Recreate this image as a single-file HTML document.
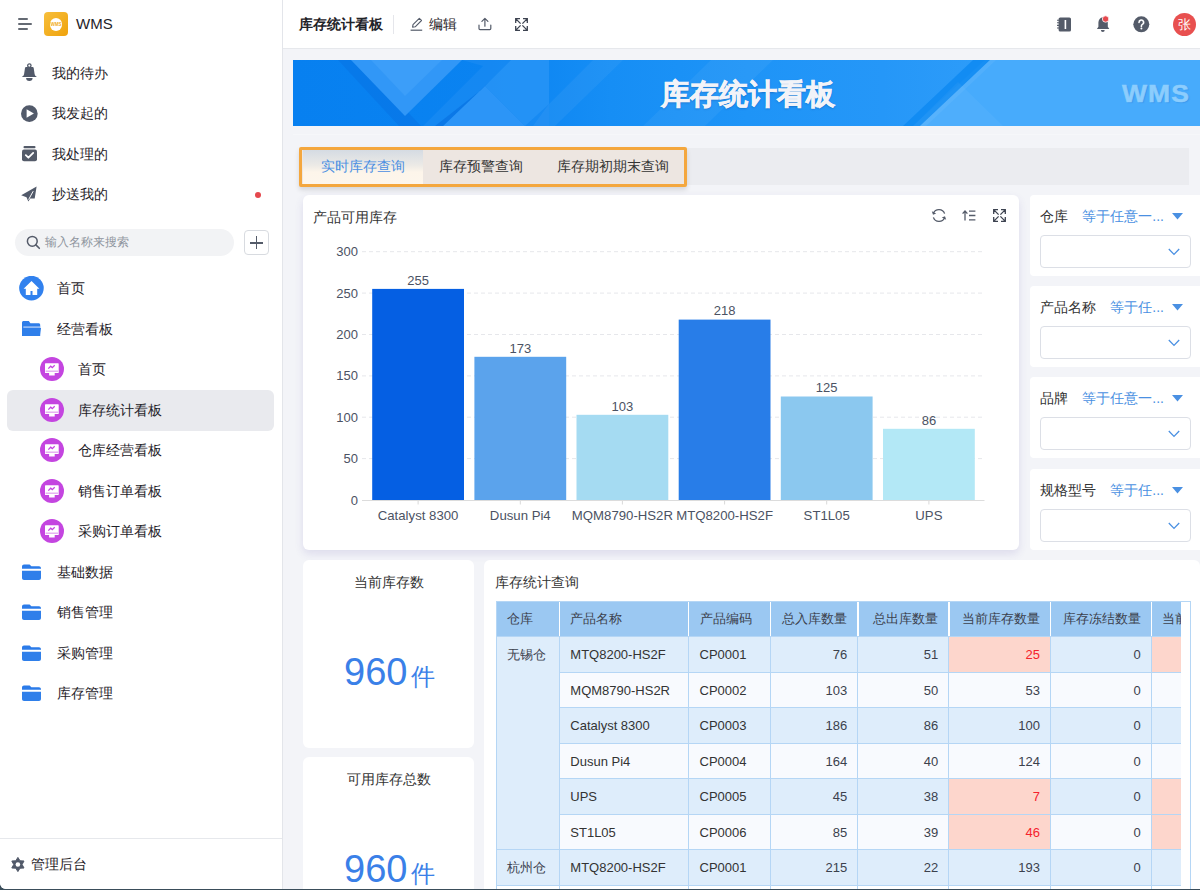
<!DOCTYPE html>
<html><head><meta charset="utf-8">
<style>
*{box-sizing:border-box;margin:0;padding:0}
html,body{width:1200px;height:890px;overflow:hidden;background:#3a4d5a}
body{font-family:"Liberation Sans",sans-serif;color:#1f2329;position:relative}
.a{position:absolute}
#app{position:absolute;left:0;top:0;width:1200px;height:889px;background:#f3f4f8;border-bottom-left-radius:6px;overflow:hidden}
#side{position:absolute;left:0;top:0;width:283px;height:889px;background:#fff;border-right:1px solid #e3e5ea}
.mi{position:absolute;left:52px;font-size:14px;line-height:16px;color:#1f2329;white-space:nowrap}
.ic{position:absolute}
.tr{position:absolute;font-size:14px;line-height:16px;color:#1f2329;white-space:nowrap}
#top{position:absolute;left:283px;top:0;width:917px;height:49px;background:#fff;border-bottom:1px solid #e6e8ec}
.tc{position:absolute;font-size:13px;line-height:15px;color:#3b414d;white-space:nowrap}
.card{position:absolute;background:#fff;border-radius:6px}
</style></head><body>
<div id="app">
<div id="side">
  <!-- hamburger -->
  <div class="a" style="left:18px;top:18px;width:10px;height:2px;background:#646a73;border-radius:1px"></div>
  <div class="a" style="left:18px;top:23px;width:14px;height:2px;background:#646a73;border-radius:1px"></div>
  <div class="a" style="left:18px;top:28px;width:10px;height:2px;background:#646a73;border-radius:1px"></div>
  <!-- logo -->
  <div class="a" style="left:44px;top:12px;width:24px;height:24px;border-radius:4px;background:linear-gradient(135deg,#f7bf3c,#efa20c)"></div>
  <div class="a" style="left:49.8px;top:18.2px;width:12.5px;height:12.5px;border-radius:50%;background:#fff"></div><div class="a" style="left:50px;top:22px;width:12px;text-align:center;font-size:4.5px;line-height:5px;font-weight:bold;color:#f2ad22">WMS</div>
  <div class="a" style="left:76px;top:15px;font-size:15px;line-height:18px;color:#1f2329">WMS</div>

  
  <!-- bell -->
  <svg class="ic" style="left:21px;top:63px" width="17" height="19" viewBox="0 0 17 19"><circle cx="8.35" cy="2.6" r="1.7" fill="none" stroke="#525a6a" stroke-width="1.3"/><path d="M5 4h6.7c.5 0 .9.4 1 .9l.9 6c.2 1.2.9 2.2 2.3 3H0.8c1.4-.8 2.1-1.8 2.3-3l.9-6c.1-.5.5-.9 1-.9z" fill="#525a6a"/><path d="M5.1 15h6.5a3.25 3 0 0 1-6.5 0z" fill="#525a6a"/></svg>
  <div class="mi" style="top:65px">我的待办</div>
  <!-- play -->
  <svg class="ic" style="left:21px;top:104.5px" width="17" height="18" viewBox="0 0 17 18"><circle cx="8.35" cy="8.65" r="8.35" fill="#525a6a"/><path d="M5.6 4.3v8.4l7.3-4.2z" fill="#fff"/></svg>
  <div class="mi" style="top:105px">我发起的</div>
  <!-- check tray -->
  <svg class="ic" style="left:21px;top:145px" width="18" height="18" viewBox="0 0 18 18"><rect x="2.5" y="1" width="12" height="2.2" rx="1" fill="#545b69"/><rect x="1" y="4.6" width="15" height="11.6" rx="2" fill="#545b69"/><path d="M4.8 10.2l2.6 2.5 4.8-4.8" stroke="#fff" stroke-width="1.8" fill="none" stroke-linecap="round" stroke-linejoin="round"/></svg>
  <div class="mi" style="top:146px">我处理的</div>
  <!-- plane -->
  <svg class="ic" style="left:21px;top:186px" width="17" height="17" viewBox="0 0 17 17"><path d="M15.6 0.6L0.2 9.2l5.3 2 1.8 4.3 2-3 4.4.1z" fill="#525a6a"/><path d="M12.2 5.2L7.6 13.6" stroke="#fff" stroke-width="1"/></svg>
  <div class="mi" style="top:186px">抄送我的</div>
  <div class="a" style="left:255px;top:191.5px;width:6px;height:6px;border-radius:50%;background:#e5484d"></div>

  <!-- search -->
  <div class="a" style="left:15px;top:229px;width:219px;height:27px;border-radius:14px;background:#f2f3f5"></div>
  <svg class="ic" style="left:26px;top:235px" width="15" height="15" viewBox="0 0 15 15"><circle cx="6.3" cy="6.3" r="4.9" stroke="#545b69" stroke-width="1.5" fill="none"/><path d="M9.9 9.9l3.4 3.4" stroke="#545b69" stroke-width="1.6" stroke-linecap="round"/></svg>
  <div class="a" style="left:45px;top:235px;font-size:12px;line-height:14px;color:#8f959e">输入名称来搜索</div>
  <div class="a" style="left:244px;top:230px;width:25px;height:25px;border:1px solid #d8dbe0;border-radius:4px;background:#fff"></div>
  <div class="a" style="left:250px;top:242px;width:13px;height:1.5px;background:#545b69"></div>
  <div class="a" style="left:255.75px;top:236px;width:1.5px;height:13px;background:#545b69"></div>

  <!-- tree -->
  <svg class="ic" style="left:19px;top:276px" width="25" height="25" viewBox="0 0 25 25"><circle cx="12.45" cy="12.1" r="12.3" fill="#3181ee"/><path d="M12.5 5L4.6 12.7h2.2V19h4.7v-4h2v4h4.7v-6.3h2.2z" fill="#fff"/></svg>
  <div class="tr" style="left:57px;top:280px">首页</div>
  <svg class="ic" style="left:22px;top:320px" width="20" height="17" viewBox="0 0 20 17"><path d="M0 2.6C0 1.7.7 1 1.6 1h5.2l1.6 2.2h8.2c.9 0 1.6.7 1.6 1.6V16H0z" fill="#2e7de9"/><path d="M1.3 6.4h17v1.4h-17z" fill="#aecbf6"/><path d="M0.6 8h18.4l-1.2 8H0.6z" fill="#2f7fea"/></svg>
  <div class="tr" style="left:57px;top:321px">经营看板</div>
  <div class="a" style="left:7px;top:390px;width:267px;height:41px;border-radius:6px;background:#e9eaee"></div>
  <svg class="ic" style="left:40px;top:357px" width="24" height="24" viewBox="0 0 24 24"><circle cx="12" cy="12" r="12" fill="#c445e0"/><rect x="5" y="6.3" width="13.7" height="9.8" rx="0.6" fill="#fff"/><path d="M8.3 11.6l2.4-2.4 1.6 1.4 2.4-2.3" stroke="#c445e0" stroke-width="1.3" fill="none"/><path d="M5.6 14.2h12.5" stroke="#e2a6f0" stroke-width="1.3"/><path d="M9.1 16h5.6v2.5H9.1z" fill="#fff"/></svg>
  <div class="tr" style="left:78px;top:361px">首页</div>
  <svg class="ic" style="left:40px;top:398px" width="24" height="24" viewBox="0 0 24 24"><circle cx="12" cy="12" r="12" fill="#c445e0"/><rect x="5" y="6.3" width="13.7" height="9.8" rx="0.6" fill="#fff"/><path d="M8.3 11.6l2.4-2.4 1.6 1.4 2.4-2.3" stroke="#c445e0" stroke-width="1.3" fill="none"/><path d="M5.6 14.2h12.5" stroke="#e2a6f0" stroke-width="1.3"/><path d="M9.1 16h5.6v2.5H9.1z" fill="#fff"/></svg>
  <div class="tr" style="left:78px;top:402px">库存统计看板</div>
  <svg class="ic" style="left:40px;top:438px" width="24" height="24" viewBox="0 0 24 24"><circle cx="12" cy="12" r="12" fill="#c445e0"/><rect x="5" y="6.3" width="13.7" height="9.8" rx="0.6" fill="#fff"/><path d="M8.3 11.6l2.4-2.4 1.6 1.4 2.4-2.3" stroke="#c445e0" stroke-width="1.3" fill="none"/><path d="M5.6 14.2h12.5" stroke="#e2a6f0" stroke-width="1.3"/><path d="M9.1 16h5.6v2.5H9.1z" fill="#fff"/></svg>
  <div class="tr" style="left:78px;top:442px">仓库经营看板</div>
  <svg class="ic" style="left:40px;top:479px" width="24" height="24" viewBox="0 0 24 24"><circle cx="12" cy="12" r="12" fill="#c445e0"/><rect x="5" y="6.3" width="13.7" height="9.8" rx="0.6" fill="#fff"/><path d="M8.3 11.6l2.4-2.4 1.6 1.4 2.4-2.3" stroke="#c445e0" stroke-width="1.3" fill="none"/><path d="M5.6 14.2h12.5" stroke="#e2a6f0" stroke-width="1.3"/><path d="M9.1 16h5.6v2.5H9.1z" fill="#fff"/></svg>
  <div class="tr" style="left:78px;top:483px">销售订单看板</div>
  <svg class="ic" style="left:40px;top:519px" width="24" height="24" viewBox="0 0 24 24"><circle cx="12" cy="12" r="12" fill="#c445e0"/><rect x="5" y="6.3" width="13.7" height="9.8" rx="0.6" fill="#fff"/><path d="M8.3 11.6l2.4-2.4 1.6 1.4 2.4-2.3" stroke="#c445e0" stroke-width="1.3" fill="none"/><path d="M5.6 14.2h12.5" stroke="#e2a6f0" stroke-width="1.3"/><path d="M9.1 16h5.6v2.5H9.1z" fill="#fff"/></svg>
  <div class="tr" style="left:78px;top:523px">采购订单看板</div>
  <svg class="ic" style="left:22px;top:564px" width="20" height="17" viewBox="0 0 20 17"><path d="M0 2.4C0 1.3.9.4 2 .4h5.6l1.8 1.8H17c1.1 0 2 .9 2 2v.6H0z" fill="#2b7be9"/><path d="M0 6.8h19V14c0 1.1-.9 2-2 2H2c-1.1 0-2-.9-2-2z" fill="#2f7fea"/></svg>
  <div class="tr" style="left:57px;top:564px">基础数据</div>
  <svg class="ic" style="left:22px;top:604px" width="20" height="17" viewBox="0 0 20 17"><path d="M0 2.4C0 1.3.9.4 2 .4h5.6l1.8 1.8H17c1.1 0 2 .9 2 2v.6H0z" fill="#2b7be9"/><path d="M0 6.8h19V14c0 1.1-.9 2-2 2H2c-1.1 0-2-.9-2-2z" fill="#2f7fea"/></svg>
  <div class="tr" style="left:57px;top:604px">销售管理</div>
  <svg class="ic" style="left:22px;top:645px" width="20" height="17" viewBox="0 0 20 17"><path d="M0 2.4C0 1.3.9.4 2 .4h5.6l1.8 1.8H17c1.1 0 2 .9 2 2v.6H0z" fill="#2b7be9"/><path d="M0 6.8h19V14c0 1.1-.9 2-2 2H2c-1.1 0-2-.9-2-2z" fill="#2f7fea"/></svg>
  <div class="tr" style="left:57px;top:645px">采购管理</div>
  <svg class="ic" style="left:22px;top:685px" width="20" height="17" viewBox="0 0 20 17"><path d="M0 2.4C0 1.3.9.4 2 .4h5.6l1.8 1.8H17c1.1 0 2 .9 2 2v.6H0z" fill="#2b7be9"/><path d="M0 6.8h19V14c0 1.1-.9 2-2 2H2c-1.1 0-2-.9-2-2z" fill="#2f7fea"/></svg>
  <div class="tr" style="left:57px;top:685px">库存管理</div>

  <div class="a" style="left:0;top:838px;width:282px;height:1px;background:#e6e8ec"></div>
  <svg class="ic" style="left:11px;top:857px" width="14" height="15" viewBox="0 0 14 15"><path d="M6.9 0.4l2.1 3.4 4 .2-1.9 3.5 1.9 3.5-4 .2-2.1 3.4-2.1-3.4-4-.2 1.9-3.5L0.8 4l4-.2z" fill="#525a6a" stroke="#525a6a" stroke-width="1" stroke-linejoin="round"/><circle cx="6.9" cy="7.5" r="2.3" fill="#fff"/></svg>
  <div class="a" style="left:31px;top:856px;font-size:14px;line-height:16px;color:#1f2329">管理后台</div>

</div>
<div id="top">
  <div class="a" style="left:16px;top:16px;font-size:14px;line-height:16px;font-weight:bold;color:#1f2329">库存统计看板</div>
  <div class="a" style="left:110px;top:15px;width:1px;height:19px;background:#e5e6eb"></div>
  <svg class="ic" style="left:127px;top:17px" width="14" height="14" viewBox="0 0 14 14"><path d="M2.6 10.2l.4-2.6 6.3-6.3 2.2 2.2-6.3 6.3z" stroke="#545b69" stroke-width="1.1" fill="none" stroke-linejoin="round"/><path d="M0.6 13.2h11.6" stroke="#545b69" stroke-width="1.2"/></svg>
  <div class="a" style="left:146px;top:16px;font-size:14px;line-height:16px;color:#1f2329">编辑</div>
  <svg class="ic" style="left:195px;top:17px" width="14" height="14" viewBox="0 0 14 14"><path d="M6.9 9.2V1.4M3.9 4.3l3-3 3 3" stroke="#545b69" stroke-width="1.2" fill="none" stroke-linecap="round" stroke-linejoin="round"/><path d="M1 8v3.6c0 .6.4 1 1 1h9.8c.6 0 1-.4 1-1V8" stroke="#545b69" stroke-width="1.2" fill="none" stroke-linecap="round"/></svg>
  <svg class="ic" style="left:232px;top:18px" width="13" height="13" viewBox="0 0 13 13"><path d="M0.7 5V0.7H5M0.9 0.9L5.6 5.6M12.3 5V0.7H8M12.1 0.9L7.4 5.6M0.7 8v4.3H5M0.9 12.1L5.6 7.4M12.3 8v4.3H8M12.1 12.1L7.4 7.4" stroke="#3d4350" stroke-width="1.3" fill="none"/></svg>

  <svg class="ic" style="left:773px;top:17px" width="16" height="15" viewBox="0 0 16 15"><rect x="2.6" y="0.5" width="12.4" height="14" rx="1.6" fill="#545b69"/><rect x="8.6" y="3" width="1.6" height="9" fill="#fff"/><path d="M1 3.2h2.4M1 5.8h2.4M1 8.4h2.4M1 11h2.4" stroke="#545b69" stroke-width="1.1"/></svg>
  <svg class="ic" style="left:813px;top:15px" width="15" height="18" viewBox="0 0 15 18"><path d="M6.8 2.2c-2.6.4-4.4 2.6-4.4 5.3v4.2L.9 13.9h12.4l-1.5-2.2V7.5c0-2.6-1.8-4.9-4.4-5.3z" fill="#545b69"/><path d="M4.9 15h3.8a1.9 1.9 0 0 1-3.8 0z" fill="#545b69"/><circle cx="9.6" cy="4" r="3.2" fill="#e5484d" stroke="#fff" stroke-width="0.8"/></svg>
  <svg class="ic" style="left:850px;top:16px" width="17" height="17" viewBox="0 0 17 17"><circle cx="8.3" cy="8.3" r="8" fill="#545b69"/><path d="M6 6.4a2.3 2.3 0 1 1 3.4 2c-.7.4-1 .8-1 1.5v.5" stroke="#fff" stroke-width="1.6" fill="none" stroke-linecap="round"/><circle cx="8.4" cy="12.6" r="1" fill="#fff"/></svg>
  <div class="a" style="left:889.5px;top:13px;width:23px;height:23px;border-radius:50%;background:#e8504f;color:#fff;font-size:13px;line-height:23px;text-align:center">张</div>
</div>

<!-- banner -->
<div class="a" style="left:293px;top:60px;width:907px;height:66px;overflow:hidden;background:linear-gradient(90deg,#0780f0 0%,#0a83f1 22%,#168ef5 35%,#1e94f7 50%,#2597f8 65%,#2d9cf9 76%,#46aafc 82%,#48acfc 100%)">
  <svg class="a" style="left:0;top:0" width="907" height="66" viewBox="0 0 907 66">
    <polygon points="45,0 66,0 128,66 106,66" fill="#0872e4" opacity="0.55"/>
    <polygon points="58,0 169,0 112,56" fill="#3197f7"/>
    <polygon points="78,0 149,0 112,36" fill="#3c9ef9"/>
    <polygon points="169,0 256,0 256,66 130,66 190,6" fill="#1c8cf4" opacity="0.6"/>
    <polygon points="150,66 192,26 232,66" fill="#3299f7" opacity="0.8"/>
    <polygon points="192,26 218,0 256,0 256,44 232,66" fill="#2a95f7" opacity="0.7"/>
    <polygon points="188,30 196,22 150,66 142,66" fill="#056ee0" opacity="0.6"/>
    <polygon points="256,44 300,0 330,0 262,66 240,66" fill="#ffffff" opacity="0.05"/>
    <polygon points="350,66 418,0 480,0 412,66" fill="#ffffff" opacity="0.05"/>
    <polygon points="620,66 692,0 907,0 907,66" fill="#47abfc"/>
    <polygon points="680,0 697,0 627,66 610,66" fill="#0e89f2" opacity="0.85"/>
    <polygon points="697,0 703,0 633,66 627,66" fill="#63b8fd" opacity="0.35"/>
    <polygon points="620,66 665,22 710,66" fill="#ffffff" opacity="0.04"/>
  </svg>
  <div class="a" style="left:368px;top:16.5px;font-size:28.6px;line-height:34px;font-weight:bold;-webkit-text-stroke:0.6px #f2f3f8;color:#f2f3f8;text-shadow:0 1px 2px rgba(0,40,120,.35);white-space:nowrap">库存统计看板</div>
  <div class="a" style="left:829px;top:21px;font-size:23px;line-height:26px;font-weight:bold;color:#8ccdfd;-webkit-text-stroke:0.5px #8ccdfd;letter-spacing:1px;transform:scaleX(1.15);transform-origin:0 50%;text-shadow:1px 1px 1px rgba(20,100,200,.25)">WMS</div>
</div>

<!-- tabs -->
<div class="a" style="left:293px;top:134px;width:907px;height:1px;background:#f6f7fa"></div>
<div class="a" style="left:300px;top:148px;width:889px;height:37px;background:#ebecf0"></div>
<div class="a" style="left:299px;top:147px;width:388px;height:40px;border:3px solid #f4a73e;border-radius:2px;background:#ede6e1;box-shadow:0 3px 5px rgba(0,0,0,.12)"></div>
<div class="a" style="left:303px;top:150px;width:120px;height:34px;background:linear-gradient(180deg,#d5dbe3 0%,#eceae6 45%,#fdf5ea 65%,#fdf6ec 100%)"></div>
<div class="a" style="left:321px;top:158px;font-size:14px;line-height:16px;color:#4a8fe2">实时库存查询</div>
<div class="a" style="left:439px;top:158px;font-size:14px;line-height:16px;color:#333">库存预警查询</div>
<div class="a" style="left:557px;top:158px;font-size:14px;line-height:16px;color:#333">库存期初期末查询</div>

<div class="card" style="left:303px;top:195px;width:716px;height:355px;box-shadow:0 4px 9px rgba(80,60,160,.13)">
  <div class="a" style="left:10px;top:14px;font-size:14px;line-height:16px;color:#333">产品可用库存</div>
  <svg class="ic" style="left:628px;top:13px" width="16" height="15" viewBox="0 0 16 15"><path d="M13.6 5.6A6 6 0 0 0 2.4 5.2" stroke="#545b69" stroke-width="1.3" fill="none"/><path d="M2.4 9.4a6 6 0 0 0 11.2.4" stroke="#545b69" stroke-width="1.3" fill="none"/><path d="M0.8 3.2l1.2 3.6 3.2-1.4z" fill="#545b69"/><path d="M15.2 11.8l-1.2-3.6-3.2 1.4z" fill="#545b69"/></svg>
  <svg class="ic" style="left:659px;top:15px" width="14" height="11" viewBox="0 0 14 11"><path d="M3 10.5V1M0.6 3.6L3 1l2.4 2.6" stroke="#545b69" stroke-width="1.3" fill="none"/><path d="M7 1.2h6.4M7 5.5h6.4M7 9.8h6.4" stroke="#545b69" stroke-width="1.3"/></svg>
  <svg class="ic" style="left:689.5px;top:14px" width="13" height="13" viewBox="0 0 13 13"><path d="M0.7 5V0.7H5M0.9 0.9L5.6 5.6M12.3 5V0.7H8M12.1 0.9L7.4 5.6M0.7 8v4.3H5M0.9 12.1L5.6 7.4M12.3 8v4.3H8M12.1 12.1L7.4 7.4" stroke="#3d4350" stroke-width="1.3" fill="none"/></svg>
  <svg class="a" style="left:0;top:0" width="716" height="355" viewBox="303 195 716 355" font-family="Liberation Sans, sans-serif">
  <line x1="362" y1="251.7" x2="984.5" y2="251.7" stroke="#e6e7eb" stroke-width="1" stroke-dasharray="4 3"/>
  <text x="358" y="256.2" text-anchor="end" font-size="13" fill="#4b5263">300</text>
  <line x1="362" y1="293.1" x2="984.5" y2="293.1" stroke="#e6e7eb" stroke-width="1" stroke-dasharray="4 3"/>
  <text x="358" y="297.6" text-anchor="end" font-size="13" fill="#4b5263">250</text>
  <line x1="362" y1="334.5" x2="984.5" y2="334.5" stroke="#e6e7eb" stroke-width="1" stroke-dasharray="4 3"/>
  <text x="358" y="339.0" text-anchor="end" font-size="13" fill="#4b5263">200</text>
  <line x1="362" y1="375.9" x2="984.5" y2="375.9" stroke="#e6e7eb" stroke-width="1" stroke-dasharray="4 3"/>
  <text x="358" y="380.4" text-anchor="end" font-size="13" fill="#4b5263">150</text>
  <line x1="362" y1="417.2" x2="984.5" y2="417.2" stroke="#e6e7eb" stroke-width="1" stroke-dasharray="4 3"/>
  <text x="358" y="421.7" text-anchor="end" font-size="13" fill="#4b5263">100</text>
  <line x1="362" y1="458.6" x2="984.5" y2="458.6" stroke="#e6e7eb" stroke-width="1" stroke-dasharray="4 3"/>
  <text x="358" y="463.1" text-anchor="end" font-size="13" fill="#4b5263">50</text>
  <text x="358" y="504.5" text-anchor="end" font-size="13" fill="#4b5263">0</text>
  <rect x="372.2" y="288.9" width="91.8" height="211.1" fill="#055fe3"/>
  <text x="418.1" y="284.6" text-anchor="middle" font-size="13" fill="#4b5263">255</text>
  <line x1="418.1" y1="500" x2="418.1" y2="504.5" stroke="#d9d9d9"/>
  <text x="418.1" y="519.8" text-anchor="middle" font-size="13.2" fill="#4b5263">Catalyst 8300</text>
  <rect x="474.4" y="356.8" width="91.8" height="143.2" fill="#5ba3ec"/>
  <text x="520.3" y="352.5" text-anchor="middle" font-size="13" fill="#4b5263">173</text>
  <line x1="520.3" y1="500" x2="520.3" y2="504.5" stroke="#d9d9d9"/>
  <text x="520.3" y="519.8" text-anchor="middle" font-size="13.2" fill="#4b5263">Dusun Pi4</text>
  <rect x="576.5" y="414.8" width="91.8" height="85.2" fill="#a5dbf2"/>
  <text x="622.4" y="410.5" text-anchor="middle" font-size="13" fill="#4b5263">103</text>
  <line x1="622.4" y1="500" x2="622.4" y2="504.5" stroke="#d9d9d9"/>
  <text x="622.4" y="519.8" text-anchor="middle" font-size="13.2" fill="#4b5263">MQM8790-HS2R</text>
  <rect x="678.7" y="319.6" width="91.8" height="180.4" fill="#287de8"/>
  <text x="724.6" y="315.3" text-anchor="middle" font-size="13" fill="#4b5263">218</text>
  <line x1="724.6" y1="500" x2="724.6" y2="504.5" stroke="#d9d9d9"/>
  <text x="724.6" y="519.8" text-anchor="middle" font-size="13.2" fill="#4b5263">MTQ8200-HS2F</text>
  <rect x="780.8" y="396.5" width="91.8" height="103.5" fill="#8bc8ef"/>
  <text x="826.7" y="392.2" text-anchor="middle" font-size="13" fill="#4b5263">125</text>
  <line x1="826.7" y1="500" x2="826.7" y2="504.5" stroke="#d9d9d9"/>
  <text x="826.7" y="519.8" text-anchor="middle" font-size="13.2" fill="#4b5263">ST1L05</text>
  <rect x="883.0" y="428.8" width="91.8" height="71.2" fill="#b3e8f6"/>
  <text x="928.9" y="424.5" text-anchor="middle" font-size="13" fill="#4b5263">86</text>
  <line x1="928.9" y1="500" x2="928.9" y2="504.5" stroke="#d9d9d9"/>
  <text x="928.9" y="519.8" text-anchor="middle" font-size="13.2" fill="#4b5263">UPS</text>
  <line x1="362" y1="500.5" x2="984.5" y2="500.5" stroke="#dcdcdc" stroke-width="1"/>
  </svg>
</div>

<div class="a" style="left:1030px;top:195px;width:180px;height:81px;background:#fff;border-radius:4px">
  <div class="a" style="left:10px;top:13px;font-size:14px;line-height:16px;color:#333;white-space:nowrap">仓库</div>
  <div class="a" style="right:46px;top:13px;font-size:14px;line-height:16px;color:#4a90e2;white-space:nowrap">等于任意一...</div>
  <svg class="ic" style="left:142px;top:18px" width="11" height="7" viewBox="0 0 11 7"><path d="M0 0h11L5.5 6.5z" fill="#4a90e2"/></svg>
  <div class="a" style="left:10px;top:40px;width:151px;height:33px;border:1px solid #dcdfe6;border-radius:4px;background:#fff"></div>
  <svg class="ic" style="left:138px;top:53px" width="12" height="8" viewBox="0 0 12 8"><path d="M0.8 1l5.2 5.4L11.2 1" stroke="#4a90e2" stroke-width="1.3" fill="none"/></svg>
</div>
<div class="a" style="left:1030px;top:286px;width:180px;height:81px;background:#fff;border-radius:4px">
  <div class="a" style="left:10px;top:13px;font-size:14px;line-height:16px;color:#333;white-space:nowrap">产品名称</div>
  <div class="a" style="right:46px;top:13px;font-size:14px;line-height:16px;color:#4a90e2;white-space:nowrap">等于任...</div>
  <svg class="ic" style="left:142px;top:18px" width="11" height="7" viewBox="0 0 11 7"><path d="M0 0h11L5.5 6.5z" fill="#4a90e2"/></svg>
  <div class="a" style="left:10px;top:40px;width:151px;height:33px;border:1px solid #dcdfe6;border-radius:4px;background:#fff"></div>
  <svg class="ic" style="left:138px;top:53px" width="12" height="8" viewBox="0 0 12 8"><path d="M0.8 1l5.2 5.4L11.2 1" stroke="#4a90e2" stroke-width="1.3" fill="none"/></svg>
</div>
<div class="a" style="left:1030px;top:377px;width:180px;height:81px;background:#fff;border-radius:4px">
  <div class="a" style="left:10px;top:13px;font-size:14px;line-height:16px;color:#333;white-space:nowrap">品牌</div>
  <div class="a" style="right:46px;top:13px;font-size:14px;line-height:16px;color:#4a90e2;white-space:nowrap">等于任意一...</div>
  <svg class="ic" style="left:142px;top:18px" width="11" height="7" viewBox="0 0 11 7"><path d="M0 0h11L5.5 6.5z" fill="#4a90e2"/></svg>
  <div class="a" style="left:10px;top:40px;width:151px;height:33px;border:1px solid #dcdfe6;border-radius:4px;background:#fff"></div>
  <svg class="ic" style="left:138px;top:53px" width="12" height="8" viewBox="0 0 12 8"><path d="M0.8 1l5.2 5.4L11.2 1" stroke="#4a90e2" stroke-width="1.3" fill="none"/></svg>
</div>
<div class="a" style="left:1030px;top:469px;width:180px;height:81px;background:#fff;border-radius:4px">
  <div class="a" style="left:10px;top:13px;font-size:14px;line-height:16px;color:#333;white-space:nowrap">规格型号</div>
  <div class="a" style="right:46px;top:13px;font-size:14px;line-height:16px;color:#4a90e2;white-space:nowrap">等于任...</div>
  <svg class="ic" style="left:142px;top:18px" width="11" height="7" viewBox="0 0 11 7"><path d="M0 0h11L5.5 6.5z" fill="#4a90e2"/></svg>
  <div class="a" style="left:10px;top:40px;width:151px;height:33px;border:1px solid #dcdfe6;border-radius:4px;background:#fff"></div>
  <svg class="ic" style="left:138px;top:53px" width="12" height="8" viewBox="0 0 12 8"><path d="M0.8 1l5.2 5.4L11.2 1" stroke="#4a90e2" stroke-width="1.3" fill="none"/></svg>
</div>

<div class="card" style="left:303px;top:560px;width:171px;height:188px">
  <div class="a" style="left:0;width:171px;top:14px;font-size:14px;line-height:16px;color:#333;text-align:center">当前库存数</div>
  <div class="a" style="left:41px;top:90px;white-space:nowrap;color:#3a80e8;font-size:38px;line-height:44px">960</div><div class="a" style="left:108px;top:103px;white-space:nowrap;color:#3a80e8;font-size:24px;line-height:28px">件</div>
</div>
<div class="card" style="left:303px;top:757px;width:171px;height:140px">
  <div class="a" style="left:0;width:171px;top:14px;font-size:14px;line-height:16px;color:#333;text-align:center">可用库存总数</div>
  <div class="a" style="left:41px;top:90px;white-space:nowrap;color:#3a80e8;font-size:38px;line-height:44px">960</div><div class="a" style="left:108px;top:103px;white-space:nowrap;color:#3a80e8;font-size:24px;line-height:28px">件</div>
</div>

<div class="card" style="left:484px;top:560px;width:716px;height:340px">
  <div class="a" style="left:11px;top:14px;font-size:14px;line-height:16px;color:#333">库存统计查询</div>
  <div class="a" style="left:11.5px;top:41px;width:685.5px;height:300px;overflow:hidden">
  <div class="a" style="left:0;top:0;width:685.5px;height:34.5px;background:#9bc8f2"></div>
  <div class="tc" style="left:11.0px;top:10px">仓库</div>
  <div class="a" style="left:63.0px;top:0;width:1.5px;height:34.5px;background:#fff"></div>
  <div class="tc" style="left:74.8px;top:10px">产品名称</div>
  <div class="a" style="left:192.2px;top:0;width:1.5px;height:34.5px;background:#fff"></div>
  <div class="tc" style="left:204.0px;top:10px">产品编码</div>
  <div class="a" style="left:274.2px;top:0;width:1.5px;height:34.5px;background:#fff"></div>
  <div class="tc" style="left:275.0px;top:10px;width:76.8px;text-align:right">总入库数量</div>
  <div class="a" style="left:361.5px;top:0;width:1.5px;height:34.5px;background:#fff"></div>
  <div class="tc" style="left:362.3px;top:10px;width:80.5px;text-align:right">总出库数量</div>
  <div class="a" style="left:452.5px;top:0;width:1.5px;height:34.5px;background:#fff"></div>
  <div class="tc" style="left:453.3px;top:10px;width:91.2px;text-align:right">当前库存数量</div>
  <div class="a" style="left:554.2px;top:0;width:1.5px;height:34.5px;background:#fff"></div>
  <div class="tc" style="left:555.0px;top:10px;width:90.3px;text-align:right">库存冻结数量</div>
  <div class="a" style="left:655.0px;top:0;width:1.5px;height:34.5px;background:#fff"></div>
  <div class="tc" style="left:666.8px;top:10px">当前可用库存数量</div>
  <div class="a" style="left:63.8px;top:35.5px;width:621.7px;height:35.5px;background:#deedfb"></div>
  <div class="a" style="left:453.3px;top:35.5px;width:101.7px;height:35.5px;background:#fdd6cc"></div>
  <div class="a" style="left:655.8px;top:35.5px;width:108.7px;height:35.5px;background:#fdd6cc"></div>
  <div class="tc" style="left:74.8px;top:46.0px;color:#333">MTQ8200-HS2F</div>
  <div class="tc" style="left:204.0px;top:46.0px;color:#333">CP0001</div>
  <div class="tc" style="left:275.0px;top:46.0px;width:76.8px;text-align:right;color:#3b414d">76</div>
  <div class="tc" style="left:362.3px;top:46.0px;width:80.5px;text-align:right;color:#3b414d">51</div>
  <div class="tc" style="left:453.3px;top:46.0px;width:91.2px;text-align:right;color:#f5222d">25</div>
  <div class="tc" style="left:555.0px;top:46.0px;width:90.3px;text-align:right;color:#3b414d">0</div>
  <div class="a" style="left:63.8px;top:71.0px;width:621.7px;height:35.5px;background:#f8fafe"></div>
  <div class="tc" style="left:74.8px;top:81.5px;color:#333">MQM8790-HS2R</div>
  <div class="tc" style="left:204.0px;top:81.5px;color:#333">CP0002</div>
  <div class="tc" style="left:275.0px;top:81.5px;width:76.8px;text-align:right;color:#3b414d">103</div>
  <div class="tc" style="left:362.3px;top:81.5px;width:80.5px;text-align:right;color:#3b414d">50</div>
  <div class="tc" style="left:453.3px;top:81.5px;width:91.2px;text-align:right;color:#3b414d">53</div>
  <div class="tc" style="left:555.0px;top:81.5px;width:90.3px;text-align:right;color:#3b414d">0</div>
  <div class="a" style="left:63.8px;top:106.5px;width:621.7px;height:35.5px;background:#deedfb"></div>
  <div class="tc" style="left:74.8px;top:117.0px;color:#333">Catalyst 8300</div>
  <div class="tc" style="left:204.0px;top:117.0px;color:#333">CP0003</div>
  <div class="tc" style="left:275.0px;top:117.0px;width:76.8px;text-align:right;color:#3b414d">186</div>
  <div class="tc" style="left:362.3px;top:117.0px;width:80.5px;text-align:right;color:#3b414d">86</div>
  <div class="tc" style="left:453.3px;top:117.0px;width:91.2px;text-align:right;color:#3b414d">100</div>
  <div class="tc" style="left:555.0px;top:117.0px;width:90.3px;text-align:right;color:#3b414d">0</div>
  <div class="a" style="left:63.8px;top:142.0px;width:621.7px;height:35.5px;background:#f8fafe"></div>
  <div class="tc" style="left:74.8px;top:152.5px;color:#333">Dusun Pi4</div>
  <div class="tc" style="left:204.0px;top:152.5px;color:#333">CP0004</div>
  <div class="tc" style="left:275.0px;top:152.5px;width:76.8px;text-align:right;color:#3b414d">164</div>
  <div class="tc" style="left:362.3px;top:152.5px;width:80.5px;text-align:right;color:#3b414d">40</div>
  <div class="tc" style="left:453.3px;top:152.5px;width:91.2px;text-align:right;color:#3b414d">124</div>
  <div class="tc" style="left:555.0px;top:152.5px;width:90.3px;text-align:right;color:#3b414d">0</div>
  <div class="a" style="left:63.8px;top:177.5px;width:621.7px;height:35.5px;background:#deedfb"></div>
  <div class="a" style="left:453.3px;top:177.5px;width:101.7px;height:35.5px;background:#fdd6cc"></div>
  <div class="a" style="left:655.8px;top:177.5px;width:108.7px;height:35.5px;background:#fdd6cc"></div>
  <div class="tc" style="left:74.8px;top:188.0px;color:#333">UPS</div>
  <div class="tc" style="left:204.0px;top:188.0px;color:#333">CP0005</div>
  <div class="tc" style="left:275.0px;top:188.0px;width:76.8px;text-align:right;color:#3b414d">45</div>
  <div class="tc" style="left:362.3px;top:188.0px;width:80.5px;text-align:right;color:#3b414d">38</div>
  <div class="tc" style="left:453.3px;top:188.0px;width:91.2px;text-align:right;color:#f5222d">7</div>
  <div class="tc" style="left:555.0px;top:188.0px;width:90.3px;text-align:right;color:#3b414d">0</div>
  <div class="a" style="left:63.8px;top:213.0px;width:621.7px;height:35.5px;background:#f8fafe"></div>
  <div class="a" style="left:453.3px;top:213.0px;width:101.7px;height:35.5px;background:#fdd6cc"></div>
  <div class="a" style="left:655.8px;top:213.0px;width:108.7px;height:35.5px;background:#fdd6cc"></div>
  <div class="tc" style="left:74.8px;top:223.5px;color:#333">ST1L05</div>
  <div class="tc" style="left:204.0px;top:223.5px;color:#333">CP0006</div>
  <div class="tc" style="left:275.0px;top:223.5px;width:76.8px;text-align:right;color:#3b414d">85</div>
  <div class="tc" style="left:362.3px;top:223.5px;width:80.5px;text-align:right;color:#3b414d">39</div>
  <div class="tc" style="left:453.3px;top:223.5px;width:91.2px;text-align:right;color:#f5222d">46</div>
  <div class="tc" style="left:555.0px;top:223.5px;width:90.3px;text-align:right;color:#3b414d">0</div>
  <div class="a" style="left:63.8px;top:248.5px;width:621.7px;height:35.5px;background:#deedfb"></div>
  <div class="tc" style="left:74.8px;top:259.0px;color:#333">MTQ8200-HS2F</div>
  <div class="tc" style="left:204.0px;top:259.0px;color:#333">CP0001</div>
  <div class="tc" style="left:275.0px;top:259.0px;width:76.8px;text-align:right;color:#3b414d">215</div>
  <div class="tc" style="left:362.3px;top:259.0px;width:80.5px;text-align:right;color:#3b414d">22</div>
  <div class="tc" style="left:453.3px;top:259.0px;width:91.2px;text-align:right;color:#3b414d">193</div>
  <div class="tc" style="left:555.0px;top:259.0px;width:90.3px;text-align:right;color:#3b414d">0</div>
  <div class="a" style="left:0;top:35.5px;width:63.8px;height:213.0px;background:#deedfb"></div>
  <div class="a" style="left:0;top:248.5px;width:63.8px;height:35.5px;background:#deedfb"></div>
  <div class="tc" style="left:11px;top:46.0px">无锡仓</div>
  <div class="tc" style="left:11px;top:259.0px">杭州仓</div>
  <div class="a" style="left:63.3px;top:34.5px;width:1px;height:400px;background:#b5d6f5"></div>
  <div class="a" style="left:192.5px;top:34.5px;width:1px;height:400px;background:#b5d6f5"></div>
  <div class="a" style="left:274.5px;top:34.5px;width:1px;height:400px;background:#b5d6f5"></div>
  <div class="a" style="left:361.8px;top:34.5px;width:1px;height:400px;background:#b5d6f5"></div>
  <div class="a" style="left:452.8px;top:34.5px;width:1px;height:400px;background:#b5d6f5"></div>
  <div class="a" style="left:554.5px;top:34.5px;width:1px;height:400px;background:#b5d6f5"></div>
  <div class="a" style="left:655.3px;top:34.5px;width:1px;height:400px;background:#b5d6f5"></div>
  <div class="a" style="left:0.0px;top:34.5px;width:685.5px;height:1px;background:#b5d6f5"></div>
  <div class="a" style="left:63.8px;top:70.5px;width:621.7px;height:1px;background:#b5d6f5"></div>
  <div class="a" style="left:63.8px;top:106.0px;width:621.7px;height:1px;background:#b5d6f5"></div>
  <div class="a" style="left:63.8px;top:141.5px;width:621.7px;height:1px;background:#b5d6f5"></div>
  <div class="a" style="left:63.8px;top:177.0px;width:621.7px;height:1px;background:#b5d6f5"></div>
  <div class="a" style="left:63.8px;top:212.5px;width:621.7px;height:1px;background:#b5d6f5"></div>
  <div class="a" style="left:0.0px;top:248.0px;width:685.5px;height:1px;background:#b5d6f5"></div>
  <div class="a" style="left:0.0px;top:283.5px;width:685.5px;height:1px;background:#b5d6f5"></div>
  <div class="a" style="left:0;top:0;width:1px;height:400px;background:#b5d6f5"></div>
  </div>
  <div class="a" style="left:697.0px;top:41px;width:9.0px;height:300px;background:#fff"></div>
  <div class="a" style="left:706.0px;top:41px;width:1px;height:300px;background:#b5d6f5"></div>
  <div class="a" style="left:11.5px;top:41px;width:695.0px;height:1px;background:#b5d6f5"></div>
</div>


</div>
</body></html>
